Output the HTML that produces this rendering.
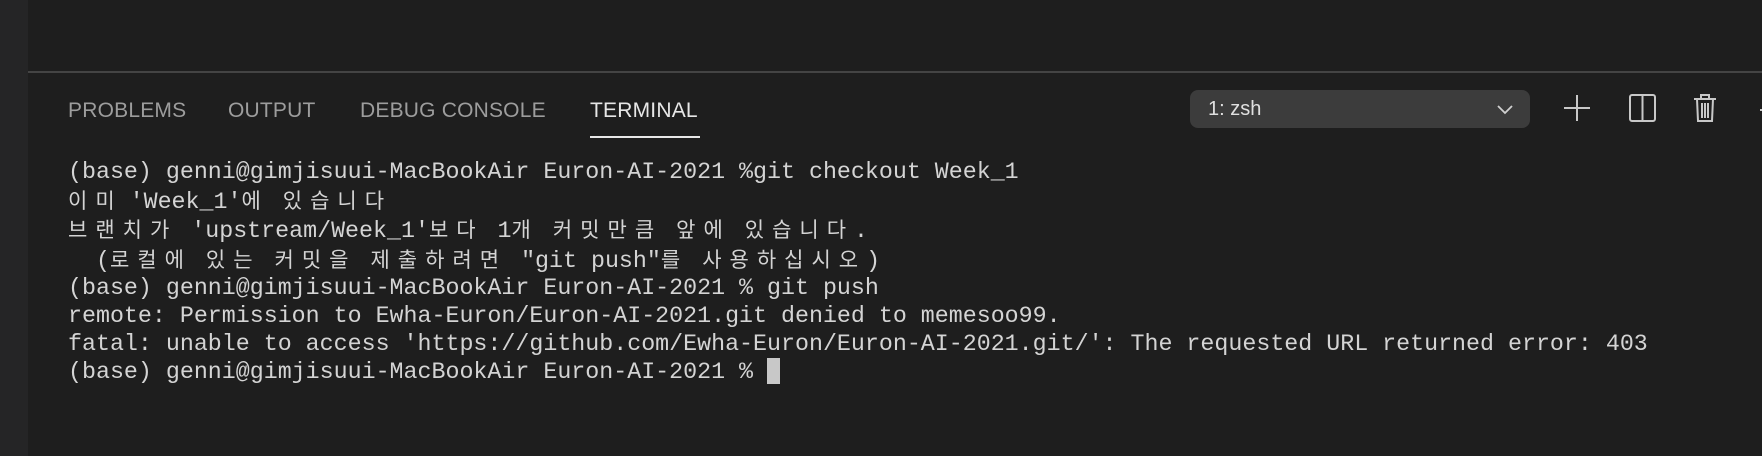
<!DOCTYPE html>
<html><head><meta charset="utf-8"><style>
html,body{margin:0;padding:0;}
body{width:1762px;height:456px;background:#1e1e1e;position:relative;overflow:hidden;font-family:"Liberation Sans",sans-serif;}
.side{position:absolute;left:0;top:0;width:28px;height:456px;background:#252526;}
.div{position:absolute;left:28px;right:0;top:71px;height:2px;background:#444;}
.tab{position:absolute;top:99px;font-size:21px;color:#9d9d9d;line-height:24px;letter-spacing:0.2px;}
.ul{position:absolute;left:590px;width:110px;top:136px;height:2px;background:#e7e7e7;}
.term{position:absolute;left:68px;top:159px;font-family:"Liberation Mono","Noto Sans CJK KR",monospace;font-size:23.3px;line-height:27.6px;color:#d4d4d4;white-space:pre;}
.k{font-family:"Noto Sans CJK KR",sans-serif;letter-spacing:8px;font-size:21px;}
.k2{font-family:"Noto Sans CJK KR",sans-serif;letter-spacing:8px;font-size:21px;margin-right:-7px;}
.cur{display:inline-block;width:13px;height:26px;background:#c8c8c8;vertical-align:-6px;}
.dd{position:absolute;left:1190px;top:90px;width:340px;height:38px;background:#3c3c3c;border-radius:8px;color:#e0e0e0;font-size:20px;line-height:38px;}
</style></head><body>
<div class="side"></div>
<div class="div"></div>
<div class="tab" style="left:68px">PROBLEMS</div>
<div class="tab" style="left:228px">OUTPUT</div>
<div class="tab" style="left:360px">DEBUG CONSOLE</div>
<div class="tab" style="left:590px;color:#e7e7e7">TERMINAL</div>
<div class="ul"></div>
<div class="dd"><span style="position:absolute;left:18px">1: zsh</span>
<svg style="position:absolute;left:306px;top:11px" width="18" height="16" viewBox="0 0 18 16"><path d="M2 5l7 7 7-7" fill="none" stroke="#d0d0d0" stroke-width="1.8"/></svg></div>
<svg style="position:absolute;left:1562px;top:93px" width="30" height="30" viewBox="0 0 30 30"><path d="M15 2v26M2 15h26" stroke="#c8c8c8" stroke-width="2"/></svg>
<svg style="position:absolute;left:1628px;top:93px" width="30" height="30" viewBox="0 0 30 30"><rect x="2" y="2" width="25" height="26" rx="2" fill="none" stroke="#c8c8c8" stroke-width="2"/><path d="M14.5 2v26" stroke="#c8c8c8" stroke-width="2"/></svg>
<svg style="position:absolute;left:1692px;top:93px" width="28" height="30" viewBox="0 0 28 30"><path d="M2 6h22M9 6V2h8v4M5 6l1 22h14l1-22M10 10v15M13 10v15M16 10v15" fill="none" stroke="#c8c8c8" stroke-width="2"/></svg>
<svg style="position:absolute;left:1752px;top:103px" width="10" height="10"><path d="M8 7h4" stroke="#c8c8c8" stroke-width="2"/></svg>
<div class="term">(base) genni@gimjisuui-MacBookAir Euron-AI-2021 %git checkout Week_1
<span class="k2">이미</span> 'Week_1'<span class="k">에</span> <span class="k">있습니다</span>
<span class="k">브랜치가</span> 'upstream/Week_1'<span class="k">보다</span> 1<span class="k">개</span> <span class="k">커밋만큼</span> <span class="k">앞에</span> <span class="k">있습니다</span>.
  (<span class="k">로컬에</span> <span class="k">있는</span> <span class="k">커밋을</span> <span class="k">제출하려면</span> "git push"<span class="k">를</span> <span class="k">사용하십시오</span>)
(base) genni@gimjisuui-MacBookAir Euron-AI-2021 % git push
remote: Permission to Ewha-Euron/Euron-AI-2021.git denied to memesoo99.
fatal: unable to access 'https://github.com/Ewha-Euron/Euron-AI-2021.git/': The requested URL returned error: 403
(base) genni@gimjisuui-MacBookAir Euron-AI-2021 % <span class="cur"></span></div>
</body></html>
